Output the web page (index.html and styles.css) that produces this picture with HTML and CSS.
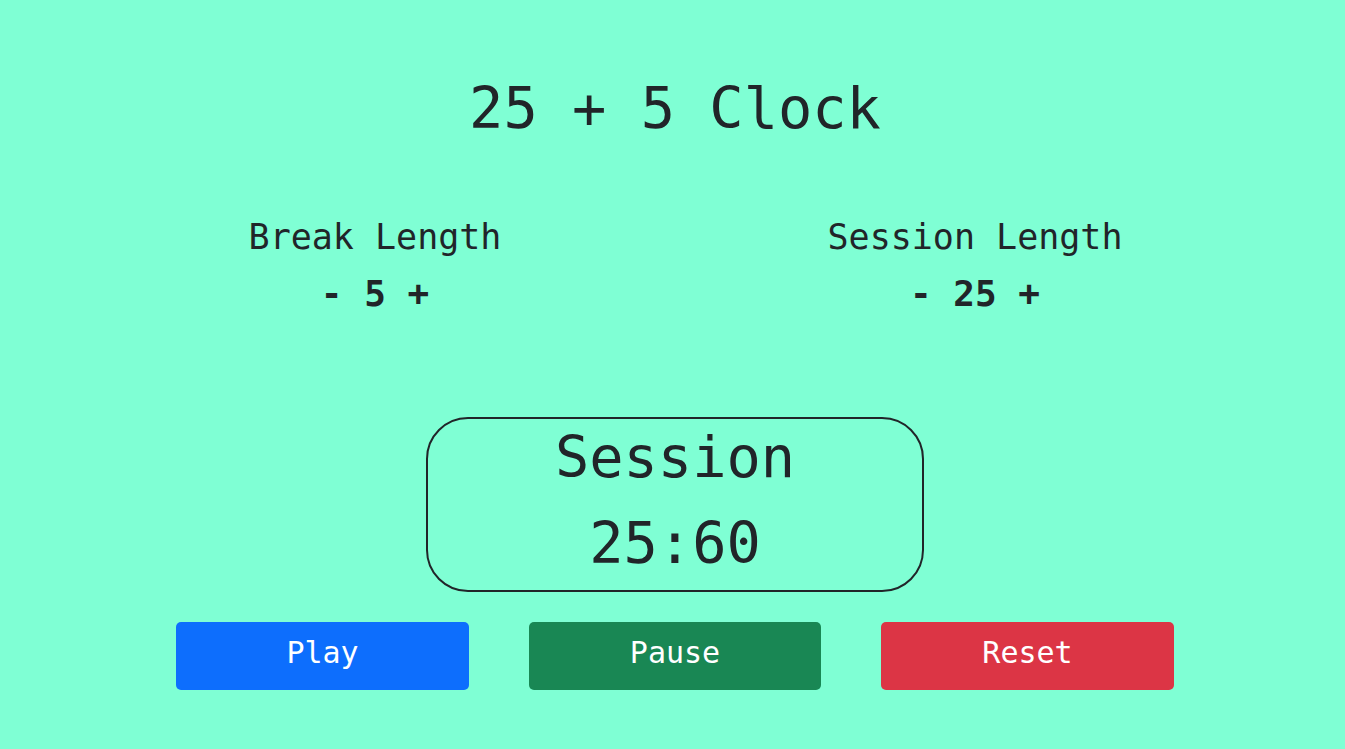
FILE: index.html
```html
<!DOCTYPE html>
<html lang="en">
<head>
<meta charset="utf-8">
<title>25 + 5 Clock</title>
<link rel="stylesheet" href="styles.css">
</head>
<body>
<div class="app">
  <h1 class="title">25 + 5 Clock</h1>
  <div class="lengths">
    <div class="length-col">
      <div class="label">Break Length</div>
      <div class="controls"><span class="ctl">-</span> <span class="val">5</span> <span class="ctl">+</span></div>
    </div>
    <div class="length-col">
      <div class="label">Session Length</div>
      <div class="controls"><span class="ctl">-</span> <span class="val">25</span> <span class="ctl">+</span></div>
    </div>
  </div>
  <div class="timer">
    <div class="timer-label">Session</div>
    <div class="timer-time">25:60</div>
  </div>
  <div class="buttons">
    <button class="btn btn-play">Play</button>
    <button class="btn btn-pause">Pause</button>
    <button class="btn btn-reset">Reset</button>
  </div>
</div>
</body>
</html>
```

FILE: styles.css
```css
html, body {
  margin: 0;
  padding: 0;
  background: #7fffd4;
  color: #212529;
  font-family: "DejaVu Sans Mono", "Liberation Mono", monospace;
}

.app {
  display: flex;
  flex-direction: column;
  align-items: center;
  padding-top: 80px;
  padding-left: 5px;
}

.title {
  margin: 0;
  font-size: 57px;
  line-height: 1;
  font-weight: normal;
}

.lengths {
  display: flex;
  width: 1200px;
  margin-top: 83px;
}

.length-col {
  flex: 1;
  text-align: center;
}

.label {
  font-size: 35px;
  line-height: 1;
}

.controls {
  margin-top: 21px;
  font-size: 36px;
  line-height: 1;
  font-weight: bold;
}

.timer {
  margin-top: 105px;
  width: 498px;
  box-sizing: border-box;
  border: 2px solid #212529;
  border-radius: 42px;
  padding: 10px 0 18px;
  text-align: center;
}

.timer-label,
.timer-time {
  font-size: 57px;
  line-height: 1;
}

.timer-time {
  margin-top: 29px;
}

.buttons {
  display: flex;
  gap: 60px;
  margin-top: 30px;
}

.btn {
  width: 293px;
  height: 68px;
  border: none;
  border-radius: 5px;
  color: #fff;
  font-family: "DejaVu Sans Mono", "Liberation Mono", monospace;
  font-size: 30px;
  line-height: 1;
  padding: 0 0 6px;
  cursor: pointer;
}

.btn-play { background: #0d6efd; }
.btn-pause { background: #198754; width: 292px; }
.btn-reset { background: #dc3545; }
```
